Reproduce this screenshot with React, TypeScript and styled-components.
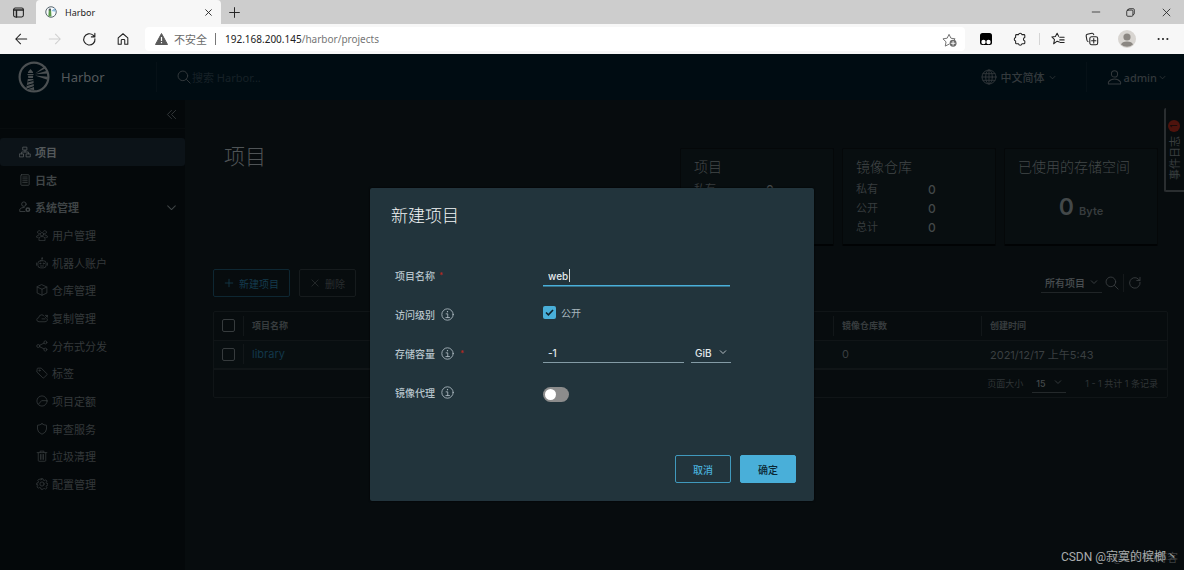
import React from 'react';
import styled, { createGlobalStyle, css } from 'styled-components';

const GlobalStyle = createGlobalStyle`
  *, *::before, *::after { box-sizing: border-box; }
  body { margin: 0; background: #070c0e; }
  button, input, select { font: inherit; color: inherit; margin: 0; }
  button { background: none; border: 0; padding: 0; cursor: pointer; }
  ul { list-style: none; margin: 0; padding: 0; }
  a { text-decoration: none; color: inherit; }
  svg { display: block; flex: none; }
`;

const chromeFont = `"Noto Sans", "Noto Sans CJK SC", sans-serif`;
const appFont = `Inter, "Noto Sans CJK SC", sans-serif`;

/* ---------- icons ---------- */

type IconName = keyof typeof shapes;

const shapes = {
  panel: (<><rect x="2" y="2.5" width="12" height="11" rx="2" /><path d="M2 5h12M5.500 5v8.500" strokeWidth="1.800" /></>),
  close: <path d="M3 3l10 10M13 3L3 13" />,
  plus: <path d="M8 2v12M2 8h12" />,
  minimize: <path d="M3 8h10" />,
  restore: (<><rect x="2.5" y="4.5" width="9" height="9" rx="1.5" /><path d="M5 4V3.500Q5 2.500 6 2.500h6Q13.500 2.500 13.500 4v6Q13.500 11 12 11" /></>),
  back: <path d="M14.500 8H2M7.500 2.500L2 8l5.500 5.500" />,
  forward: <path d="M1.500 8H14M8.500 2.500L14 8l-5.500 5.500" />,
  reload: <path d="M13.800 7.200a6 6 0 1 1-2-3.800l1.700 1.700M13.700 1.500v3.700h-3.700" />,
  home: <path d="M2.500 6.800L8 2l5.500 4.800V14H10V9.500q0-1-1-1H7q-1 0-1 1V14H2.500z" />,
  starAdd: (<><path d="M7.500 13l-4 2 .8-4.500L1 7.300l4.500-.7L7.500 2.500l2 4.100 4.500.7-1.500 1.500" /><circle cx="11.800" cy="12" r="3.700" fill="currentColor" stroke="none" /><path d="M11.800 10v4M9.800 12h4" stroke="#fff" /></>),
  puzzle: <path d="M4 3h2.300a2 2 0 0 1 3.900 0h2.300q1 0 1 1v2.300a2 2 0 0 0 0 3.900v2.300q0 1-1 1h-2.300a2 2 0 0 1-3.900 0H4q-1 0-1-1v-2.300a2 2 0 0 1 0-3.900V4q0-1 1-1z" />,
  starList: <path d="M9.500 11.500l-2.500-1-4 3 1-4.800L1 5.700l4-.5L7 1.500l1.800 3.500M10 6h5M10 9h5M10.500 12H15" />,
  collections: (<><rect x="5.500" y="5.500" width="9" height="9" rx="2" /><path d="M10 7.500v5M7.500 10h5M3.500 11Q2.500 10.500 2.200 9.300L1.300 4.500Q1.200 3 2.600 2.600L8 1.500q1.500-.2 2 1.500" /></>),
  dots: (<g fill="currentColor" stroke="none"><circle cx="3" cy="8" r="1.200" /><circle cx="8" cy="8" r="1.200" /><circle cx="13" cy="8" r="1.200" /></g>),
  search: (<><circle cx="6.700" cy="6.700" r="5.500" /><path d="M10.800 10.800L15 15" /></>),
  globe: (<><circle cx="8" cy="8" r="7" /><ellipse cx="8" cy="8" rx="3.300" ry="7" /><path d="M8 1v14M1 8h14M2 4.700h12M2 11.300h12" /></>),
  person: (<><circle cx="8" cy="4.200" r="3.300" /><path d="M1.500 15v-2.200Q4 9.600 8 9.600t6.500 3.200V15z" /></>),
  chevron: <path d="M2.500 5.500L8 11l5.500-5.500" />,
  collapse: <path d="M8 2L2 8l6 6M14 2L8 8l6 6" />,
  projects: (<><rect x="5.500" y="1.500" width="5" height="4" /><rect x="1" y="10.500" width="5" height="4" /><rect x="10" y="10.500" width="5" height="4" /><path d="M8 5.500V8M3.500 10.500V8h9v2.500" /></>),
  logs: (<><rect x="2.500" y="1" width="11" height="14" rx="1" /><path d="M5 4h1M7 4h4M5 6.500h1M7 6.500h4M5 9h1M7 9h4M5 11.500h1M7 11.500h4" /></>),
  admin: (<><circle cx="6.500" cy="4.200" r="3" /><path d="M8 14H1v-3q2-2.500 6-2.500" /><circle cx="11.800" cy="11.500" r="2.300" strokeWidth="2" /></>),
  users: (<><circle cx="8" cy="7" r="2.300" /><path d="M4 15v-3q1.500-2 4-2t4 2v3z" /><path d="M5 6.500A2.200 2.200 0 1 1 6 3M11 6.500A2.200 2.200 0 1 0 10 3M3 11H.800V9.500Q2 8 4 8M13 11h2.200V9.500Q14 8 12 8" /></>),
  robot: (<><rect x="2.500" y="5" width="11" height="9.500" rx="3.500" /><path d="M8 5V2M.800 8v3M15.200 8v3M6 12h4" /><circle cx="8" cy="1.500" r=".6" /><circle cx="5.700" cy="8.700" r=".7" /><circle cx="10.300" cy="8.700" r=".7" /></>),
  cube: <path d="M8 1l6.500 3v8L8 15l-6.500-3V4zM1.500 4L8 7l6.500-3M8 7v8" />,
  cloud: <path d="M14.500 8.500q1 1 .5 2.500-.6 2-3 2H4q-3-.3-3-2.700 0-2.200 2.500-2.600Q4 4 7.500 3.700q2.300 0 3.300 1.800M8 9.200h4M12.500 7.500L15 5M12.500 4.500h3V7" />,
  share: (<><circle cx="3" cy="8" r="2" /><circle cx="12.500" cy="3.200" r="2" /><circle cx="12.500" cy="12.800" r="2" /><path d="M4.800 7.100l6-3M4.800 8.900l6 3" /></>),
  tag: (<><path d="M1.500 2.500q0-1 1-1H7L14.500 9q.6.700 0 1.400l-4 4q-.7.600-1.400 0L1.500 7z" /><circle cx="4.700" cy="4.700" r=".8" /></>),
  quota: (<><circle cx="8" cy="8" r="6.800" /><path d="M3.500 12L7.500 7.500H14.500" /></>),
  shield: <path d="M8 1q3 2 6 2v5q0 4.500-6 7-6-2.500-6-7V3q3 0 6-2z" />,
  trash: <path d="M1.500 3.500h13M5.500 3.500V1.500h5v2M3 3.500V14q0 1 1 1h8q1 0 1-1V3.500M6 6v6.500M8 6v6.500M10 6v6.500" />,
  gear: (<><circle cx="8" cy="8" r="2.800" /><path d="M6.700 1h2.600l.5 1.900 1.300.5 1.700-1 1.800 1.800-1 1.700.5 1.300 1.900.5v1.600l-1.900.8-.5 1.300 1 1.700-1.800 1.800-1.700-1-1.300.5L9.300 15H6.700l-.5-1.900-1.300-.5-1.700 1-1.800-1.800 1-1.700-.5-1.300L1 9.300V6.700l1.900-.5.5-1.300-1-1.700 1.800-1.800 1.700 1 1.300-.5z" /></>),
  info: (<><circle cx="8" cy="8" r="7" /><circle cx="8" cy="4.500" r=".8" fill="currentColor" stroke="none" /><path d="M6.300 7.200h2v4.500M6 11.800h4.500" /></>),
};

const Icon = ({ name, size = 12, weight = 1 }: { name: IconName; size?: number; weight?: number }) => (
  <svg width={size} height={size} viewBox="0 0 16 16" fill="none" stroke="currentColor" strokeWidth={weight} strokeLinecap="round" strokeLinejoin="round" aria-hidden="true">
    {shapes[name]}
  </svg>
);

const HarborLogo = () => (
  <svg width="32" height="32" viewBox="0 0 32 32" aria-hidden="true">
    <circle cx="16" cy="16" r="14.400" fill="none" stroke="#4b5052" strokeWidth="2.200" />
    <g fill="#4b5052">
      <path d="M10 11l2.500-3L15 11v1h-5zM9.500 13h6v1h-6zM10 14.800h5.200l-.3 2.200h-4.600zM9.800 18h5.500l.9 11-8-.8z" />
      <path d="M17 12.500L27 5l1.300 2zM17 13.300l12.200-3.500.8 2.800zM17 14.500l13 1.300-.7 3z" />
    </g>
    <path d="M9.500 21l6-1.500M9 24.500l7-2M9 28l7-2.500" stroke="#000c12" strokeWidth="1" />
  </svg>
);

const Favicon = () => (
  <svg width="12" height="12" viewBox="0 0 16 16" aria-hidden="true">
    <circle cx="8" cy="8" r="7" fill="#f7fbfd" stroke="#53616a" strokeWidth="1.300" />
    <path d="M8.500 6.500L13 2.500l1.500 5z" fill="#8fbde0" />
    <path d="M5 5h3l.7 9H4.500z" fill="#5d9b4c" />
    <path d="M5 3.500h3V6H5z" fill="#52595d" />
  </svg>
);

/* ---------- browser frame ---------- */

const Page = styled.div`
  min-height: 100vh;
  display: flex;
  flex-direction: column;
  background: #070c0e;
`;

const TabStrip = styled.div`
  height: 24px;
  display: flex;
  align-items: stretch;
  background: #cdcdcd;
  color: #222;
  font: 9px ${chromeFont};
`;

const StripButton = styled.button<{ $width: number }>`
  width: ${p => p.$width}px;
  display: grid;
  place-items: center;
`;

const Tab = styled.div`
  width: 185px;
  display: flex;
  align-items: center;
  gap: 8px;
  padding: 0 8px 0 9px;
  background: #f7f7f7;
  border-radius: 4px 4px 0 0;
`;

const TabTitle = styled.span`
  flex: 1;
`;

const WindowButtons = styled.div`
  display: flex;
  margin-left: auto;
`;

const Toolbar = styled.div`
  height: 30px;
  display: flex;
  align-items: center;
  background: #f7f7f7;
  color: #222;
  font: 11px ${chromeFont};
`;

const ToolButton = styled.button<{ $width?: number; $faded?: boolean }>`
  width: ${p => p.$width ?? 34}px;
  height: 24px;
  display: grid;
  place-items: center;
  color: ${p => (p.$faded ? '#cfcfcf' : 'inherit')};
`;

const NavButtons = styled.div`
  display: flex;
  padding: 0 5px 0 4px;
`;

const AddressBar = styled.div`
  flex: 1;
  height: 24px;
  display: flex;
  align-items: center;
  gap: 6px;
  padding: 0 8px 0 10px;
  background: #fff;
  border-radius: 4px;
  color: #6b6b6b;
`;

const AddressDivider = styled.span`
  width: 1px;
  height: 12px;
  margin: 0 3px 0 2px;
  background: #777;
`;

const Url = styled.span`
  flex: 1;
  font-size: 10px;
  color: #767676;
  b { font-weight: 400; color: #222; }
`;

const ToolDivider = styled.span`
  width: 1px;
  height: 12px;
  background: #d5d5d5;
`;

const DividerSlot = styled.span`
  width: 12px;
  display: grid;
  place-items: center;
`;

/* ---------- application shell ---------- */

const Shell = styled.div`
  position: relative;
  flex: 1;
  display: flex;
  flex-direction: column;
  font: 11px ${appFont};
  color: #3a3f41;
`;

const Header = styled.header`
  height: 46px;
  display: flex;
  align-items: center;
  background: #000c12;
  color: #33393c;
`;

const Brand = styled.a`
  display: flex;
  align-items: center;
  gap: 11px;
  width: 157px;
  height: 30px;
  padding-left: 18px;
  border-right: 1px solid #061117;
  font: 13px "Noto Sans", sans-serif;
  color: #54595b;
`;

const GlobalSearch = styled.label`
  flex: 1;
  display: flex;
  align-items: center;
  gap: 1px;
  padding-left: 20px;
  input {
    width: 160px;
    padding: 0;
    border: 0;
    outline: 0;
    background: none;
    font: 11px "Noto Sans", "Noto Sans CJK SC", sans-serif;
    &::placeholder { color: #172127; opacity: 1; }
  }
`;

const HeaderMenu = styled.button<{ $gap: number }>`
  display: flex;
  align-items: center;
  gap: ${p => p.$gap}px;
  height: 30px;
  font: 500 11px "Noto Sans", "Noto Sans CJK SC", sans-serif;
`;

const LanguageMenu = styled(HeaderMenu)`
  padding-right: 30px;
  border-right: 1px solid #061117;
`;

const UserMenu = styled(HeaderMenu)`
  padding: 0 18px 0 20px;
`;

const Body = styled.div`
  flex: 1;
  display: flex;
`;

const Sidebar = styled.nav`
  width: 185px;
  flex: none;
  background: #04080a;
`;

const CollapseRow = styled.div`
  height: 29px;
  margin-bottom: 9px;
  display: flex;
  align-items: center;
  justify-content: flex-end;
  padding-right: 8px;
  border-bottom: 1px solid #080c0e;
`;

const MenuList = styled.ul`
  height: 360px;
  display: grid;
  grid-auto-rows: 1fr;
`;

const MenuLink = styled.a<{ $nested?: boolean; $active?: boolean }>`
  height: 100%;
  display: flex;
  align-items: center;
  gap: 4px;
  padding: 0 8px 0 ${p => (p.$nested ? 36 : 19)}px;
  border-radius: 3px;
  color: ${p => (p.$nested ? '#34393b' : '#3f4446')};
  font-weight: ${p => (p.$nested ? 400 : 700)};
  ${p => p.$active && css`
    background: #0c1318;
    color: #54595b;
  `}
  span { flex: 1; }
`;

const Content = styled.main`
  flex: 1;
  min-width: 0;
  padding: 48px 16px 0 28px;
`;

const Summary = styled.div`
  display: flex;
  justify-content: space-between;
  padding: 0 10px 0 11px;
  min-height: 99px;
`;

const PageTitle = styled.h1`
  margin: 0;
  font-size: 21px;
  line-height: 17px;
  font-weight: 300;
  color: #4f5456;
`;

const Cards = styled.div`
  display: flex;
  gap: 8px;
`;

const Card = styled.section`
  width: 154px;
  height: 98px;
  padding: 8px 13px;
  border: 1px solid #050809;
  border-bottom: 2px solid #010304;
  border-radius: 2px;
  background: #080e10;
  color: #373c3e;
`;

const CardTitle = styled.h2`
  margin: 0 0 3px;
  font-size: 14px;
  line-height: 20px;
  font-weight: 300;
  color: #434849;
`;

const Stat = styled.div`
  display: grid;
  grid-template-columns: 72px 1fr;
  line-height: 19px;
  b { font-weight: 500; font-size: 12px; color: #434849; }
`;

const Storage = styled.div`
  display: flex;
  align-items: baseline;
  justify-content: center;
  gap: 5px;
  font-weight: 600;
  line-height: 54px;
  strong { font-size: 23px; font-weight: 600; color: #434849; }
`;

const Actions = styled.div`
  display: flex;
  align-items: center;
  gap: 9px;
  margin: 22px 0 14px;
`;

const OutlineButton = styled.button<{ $muted?: boolean }>`
  height: 28px;
  display: flex;
  align-items: center;
  gap: 5px;
  padding: 0 10px;
  border: 1px solid ${p => (p.$muted ? '#161b1d' : '#0e2732')};
  border-radius: 2px;
  color: ${p => (p.$muted ? '#292d2f' : '#143b4d')};
  font-size: 10px;
`;

const Filters = styled.div`
  display: flex;
  align-items: center;
  gap: 3px;
  margin-left: auto;
  padding-right: 26px;
`;

const FilterDivider = styled.span`
  width: 1px;
  height: 18px;
  margin: 0 1px;
  background: #15191b;
`;

const SelectBox = styled.span<{ $width: number; $line: string }>`
  position: relative;
  display: inline-flex;
  width: ${p => p.$width}px;
  border-bottom: 1px solid ${p => p.$line};
  select {
    width: 100%;
    height: 18px;
    padding: 0 0 0 4px;
    border: 0;
    outline: 0;
    appearance: none;
    background: transparent;
    font-weight: 500;
  }
  svg {
    position: absolute;
    right: 4px;
    top: 4px;
    pointer-events: none;
  }
`;

const FilterSelect = styled(SelectBox)`
  font-size: 10px;
  color: #4a4f51;
`;

const PageSizeSelect = styled(SelectBox)`
  color: #44494b;
`;

const TableFrame = styled.div`
  border: 1px solid #101517;
  border-radius: 2px;
`;

const Table = styled.table`
  width: 100%;
  border-collapse: collapse;
  table-layout: fixed;
  th, td { padding: 0; text-align: left; font-weight: 400; }
  th { height: 28px; font-size: 9px; font-weight: 700; color: #373c3e; }
  td { height: 28px; background: #080e10; border-top: 1px solid #101517; }
`;

const Cell = styled.div<{ $first?: boolean }>`
  height: 20px;
  display: flex;
  align-items: center;
  padding-left: ${p => (p.$first ? 0 : 8)}px;
  border-left: ${p => (p.$first ? 0 : 1)}px solid #121719;
`;

const BodyCell = styled.div`
  padding-left: 9px;
`;

const RowCheck = styled.input`
  appearance: none;
  display: block;
  width: 13px;
  height: 13px;
  margin: 0 0 0 8px;
  border: 1px solid #363b3d;
  border-radius: 2px;
`;

const TableFooter = styled.div`
  height: 29px;
  display: flex;
  align-items: center;
  justify-content: flex-end;
  gap: 9px;
  padding-right: 9px;
  border-top: 2px solid #101517;
  font-size: 9px;
  color: #303537;
`;

const RecordCount = styled.span`
  margin-left: 10px;
`;

const ProjectLink = styled.a`
  color: #12374a;
`;

const EventTab = styled.button`
  position: absolute;
  top: 54px;
  right: 0;
  width: 20px;
  height: 84px;
  display: flex;
  flex-direction: column;
  align-items: center;
  gap: 4px;
  padding: 12px 2px 0 0;
  border-left: 2px solid #2a2e30;
  border-bottom: 2px solid #2a2e30;
  border-radius: 2px 0 0 2px;
  font-size: 11px;
`;

const EventBadge = styled.span`
  width: 12px;
  height: 12px;
  border-radius: 50%;
  background: #4e130d;
  color: #0a0a0a;
  font-size: 9px;
  line-height: 12px;
  text-align: center;
  transform: rotate(-90deg);
`;

const EventLabel = styled.span`
  writing-mode: vertical-rl;
  text-orientation: sideways;
  transform: rotate(180deg);
`;

/* ---------- dialog ---------- */

const Backdrop = styled.div`
  position: absolute;
  inset: 0;
  display: flex;
  justify-content: center;
  align-items: flex-start;
  padding-top: 134px;
`;

const Dialog = styled.form`
  width: 444px;
  padding: 18px 18px 18px 21px;
  border-radius: 2px;
  background: #22343c;
  box-shadow: 0 0 2px #000;
  color: #b6c3ca;
  font-size: 10px;
`;

const DialogTitle = styled.h2`
  margin: 0 0 40px;
  font-size: 17px;
  line-height: 20px;
  font-weight: 300;
  color: #f2f5f6;
`;

const Field = styled.div`
  height: 39px;
  display: grid;
  grid-template-columns: 148px 1fr;
  margin-left: 4px;
`;

const FieldLabel = styled.div<{ $gap?: number }>`
  display: flex;
  align-items: center;
  gap: ${p => p.$gap ?? 6}px;
  height: 24px;
  margin-top: -3px;
  font-weight: 500;
`;

const Required = styled.span`
  color: #b8281c;
  font-size: 8px;
`;

const Controls = styled.div`
  position: relative;
  display: flex;
  align-items: flex-start;
  gap: 7px;
  color: #e4eaed;
`;

const TextInput = styled.input<{ $width: number; $active?: boolean }>`
  width: ${p => p.$width}px;
  height: 19px;
  padding: 0 5px;
  border: 0;
  border-bottom: 1px solid #849ba5;
  outline: 0;
  background: none;
  font-weight: 500;
  ${p => p.$active && css`
    height: 20px;
    border-bottom-color: #49afd9;
    box-shadow: 0 1px 0 rgba(73, 175, 217, 0.5);
  `}
`;

const Caret = styled.span`
  position: absolute;
  left: 26px;
  top: 3px;
  width: 1px;
  height: 13px;
  background: #cfd8dc;
`;

const CheckLabel = styled.label`
  display: flex;
  align-items: center;
  gap: 5px;
  height: 15px;
  color: #a9b7be;
`;

const CheckMark = styled.span`
  position: relative;
  display: block;
  width: 13px;
  height: 13px;
  input {
    appearance: none;
    display: block;
    width: 13px;
    height: 13px;
    border-radius: 2px;
    background: #49afd9;
  }
  svg {
    position: absolute;
    inset: 0;
    pointer-events: none;
  }
`;

const Toggle = styled.input`
  appearance: none;
  width: 26px;
  height: 15px;
  margin: 4px 0 0;
  padding: 2px;
  border-radius: 8px;
  background: #8c8c8c;
  &::before {
    content: '';
    display: block;
    width: 11px;
    height: 11px;
    border-radius: 50%;
    background: #fff;
  }
`;

const DialogActions = styled.div`
  display: flex;
  justify-content: flex-end;
  gap: 9px;
  margin-top: 33px;
`;

const DialogButton = styled.button<{ $primary?: boolean }>`
  width: 56px;
  height: 28px;
  border: 1px solid #4099bd;
  border-radius: 2px;
  color: ${p => (p.$primary ? '#0b2733' : '#49afd9')};
  font-weight: 500;
  ${p => p.$primary && css`
    border-color: #49afd9;
    background: #49afd9;
  `}
`;

const Watermark = styled.div`
  position: absolute;
  right: 6px;
  bottom: 4px;
  font: 12px/17px Roboto, "Noto Sans CJK SC", sans-serif;
  color: #a9acad;
`;

const BackMark = styled.div`
  position: absolute;
  right: 6px;
  bottom: 3px;
  font: 11px/17px Roboto, "Noto Sans CJK SC", sans-serif;
  color: #3c4042;
`;

/* ---------- data ---------- */

const menu: { label: string; icon: IconName; nested?: boolean; active?: boolean; expandable?: boolean }[] = [
  { label: '项目', icon: 'projects', active: true },
  { label: '日志', icon: 'logs' },
  { label: '系统管理', icon: 'admin', expandable: true },
  { label: '用户管理', icon: 'users', nested: true },
  { label: '机器人账户', icon: 'robot', nested: true },
  { label: '仓库管理', icon: 'cube', nested: true },
  { label: '复制管理', icon: 'cloud', nested: true },
  { label: '分布式分发', icon: 'share', nested: true },
  { label: '标签', icon: 'tag', nested: true },
  { label: '项目定额', icon: 'quota', nested: true },
  { label: '审查服务', icon: 'shield', nested: true },
  { label: '垃圾清理', icon: 'trash', nested: true },
  { label: '配置管理', icon: 'gear', nested: true },
];

const statCards = [
  { title: '项目', rows: [['私有', 0], ['公开', 1], ['总计', 1]] },
  { title: '镜像仓库', rows: [['私有', 0], ['公开', 0], ['总计', 0]] },
];

/* ---------- sections ---------- */

const BrowserFrame = () => (
  <>
    <TabStrip>
      <StripButton $width={36} aria-label="Tab actions"><Icon name="panel" size={13} weight={1.3} /></StripButton>
      <Tab>
        <Favicon />
        <TabTitle>Harbor</TabTitle>
        <button aria-label="Close tab"><Icon name="close" size={9} weight={1.6} /></button>
      </Tab>
      <StripButton $width={27} aria-label="New tab"><Icon name="plus" size={13} weight={1.2} /></StripButton>
      <WindowButtons>
        <StripButton $width={35} aria-label="Minimize"><Icon name="minimize" size={12} /></StripButton>
        <StripButton $width={35} aria-label="Restore"><Icon name="restore" size={11} weight={1.2} /></StripButton>
        <StripButton $width={36} aria-label="Close window"><Icon name="close" size={11} weight={1.2} /></StripButton>
      </WindowButtons>
    </TabStrip>
    <Toolbar>
      <NavButtons>
        <ToolButton aria-label="Back"><Icon name="back" size={14} weight={1.2} /></ToolButton>
        <ToolButton aria-label="Forward" $faded><Icon name="forward" size={14} weight={1.2} /></ToolButton>
        <ToolButton aria-label="Reload"><Icon name="reload" size={15} weight={1.2} /></ToolButton>
        <ToolButton aria-label="Home"><Icon name="home" size={14} weight={1.2} /></ToolButton>
      </NavButtons>
      <AddressBar>
        <svg width="13" height="12" viewBox="0 0 13 12" aria-hidden="true">
          <path d="M6.500.500L12.500 11.500H.500z" fill="#5a5a5a" stroke="#5a5a5a" strokeLinejoin="round" />
          <path d="M6.500 4v4M6.500 9v1.300" stroke="#fff" strokeWidth="1.200" />
        </svg>
        <span>不安全</span>
        <AddressDivider />
        <Url><b>192.168.200.145</b>/harbor/projects</Url>
        <button aria-label="Add to favorites"><Icon name="starAdd" size={15} /></button>
      </AddressBar>
      <ToolButton aria-label="Tampermonkey" $width={42}>
        <svg width="14" height="14" viewBox="0 0 14 14" aria-hidden="true">
          <rect x="1" y="1" width="12" height="12" rx="2.500" fill="#000" />
          <circle cx="4.500" cy="10" r="2.200" fill="#fff" /><circle cx="9.500" cy="10" r="2.200" fill="#fff" />
        </svg>
      </ToolButton>
      <ToolButton aria-label="Extensions" $width={26}><Icon name="puzzle" size={14} weight={1.2} /></ToolButton>
      <DividerSlot><ToolDivider /></DividerSlot>
      <ToolButton aria-label="Favorites" $width={26}><Icon name="starList" size={14} weight={1.2} /></ToolButton>
      <ToolButton aria-label="Collections" $width={41}><Icon name="collections" size={14} weight={1.2} /></ToolButton>
      <ToolButton aria-label="Profile" $width={30}>
        <svg width="18" height="18" viewBox="0 0 18 18" aria-hidden="true">
          <circle cx="9" cy="9" r="9" fill="#d8d5d1" />
          <circle cx="9" cy="7" r="3.600" fill="#8b8782" />
          <path d="M3 14.500Q4 11.600 9 11.600t6 2.900A9 9 0 0 1 3 14.500z" fill="#8b8782" />
        </svg>
      </ToolButton>
      <ToolButton aria-label="Settings and more" $width={42}><Icon name="dots" size={14} /></ToolButton>
    </Toolbar>
  </>
);

const SideMenu = () => (
  <Sidebar>
    <CollapseRow>
      <button aria-label="收起"><Icon name="collapse" size={11} weight={1.2} /></button>
    </CollapseRow>
    <MenuList>
      {menu.map(item => (
        <li key={item.label}>
          <MenuLink href="#" $nested={item.nested} $active={item.active}>
            <Icon name={item.icon} size={12} weight={1.1} />
            <span>{item.label}</span>
            {item.expandable && <Icon name="chevron" size={11} weight={1.5} />}
          </MenuLink>
        </li>
      ))}
    </MenuList>
  </Sidebar>
);

const ProjectsPage = () => (
  <Content>
    <Summary>
      <PageTitle>项目</PageTitle>
      <Cards>
        {statCards.map(card => (
          <Card key={card.title}>
            <CardTitle>{card.title}</CardTitle>
            {card.rows.map(([label, value]) => (
              <Stat key={label}><span>{label}</span><b>{value}</b></Stat>
            ))}
          </Card>
        ))}
        <Card>
          <CardTitle>已使用的存储空间</CardTitle>
          <Storage><strong>0</strong>Byte</Storage>
        </Card>
      </Cards>
    </Summary>
    <Actions>
      <OutlineButton><Icon name="plus" size={10} weight={1.3} />新建项目</OutlineButton>
      <OutlineButton $muted><Icon name="close" size={10} weight={1.3} />删除</OutlineButton>
      <Filters>
        <FilterSelect $width={61} $line="#202527">
          <select aria-label="项目范围"><option>所有项目</option></select>
          <Icon name="chevron" size={8} weight={1.5} />
        </FilterSelect>
        <button aria-label="搜索"><Icon name="search" size={14} /></button>
        <FilterDivider />
        <button aria-label="刷新"><Icon name="reload" size={14} /></button>
      </Filters>
    </Actions>
    <TableFrame>
      <Table>
        <colgroup>
          <col width="29" />
          <col />
          <col width="148" />
          <col width="186" />
        </colgroup>
        <thead>
          <tr>
            <th><Cell $first><RowCheck type="checkbox" aria-label="全选" /></Cell></th>
            <th><Cell>项目名称</Cell></th>
            <th><Cell>镜像仓库数</Cell></th>
            <th><Cell>创建时间</Cell></th>
          </tr>
        </thead>
        <tbody>
          <tr>
            <td><RowCheck type="checkbox" aria-label="选择 library" /></td>
            <td><Cell><ProjectLink href="#">library</ProjectLink></Cell></td>
            <td><BodyCell>0</BodyCell></td>
            <td><BodyCell>2021/12/17 上午5:43</BodyCell></td>
          </tr>
        </tbody>
      </Table>
      <TableFooter>
        <label htmlFor="page-size">页面大小</label>
        <PageSizeSelect $width={34} $line="#24292b">
          <select id="page-size"><option>15</option></select>
          <Icon name="chevron" size={8} weight={1.5} />
        </PageSizeSelect>
        <RecordCount>1 - 1 共计 1 条记录</RecordCount>
      </TableFooter>
    </TableFrame>
  </Content>
);

const NewProjectDialog = () => (
  <Backdrop>
    <Dialog role="dialog" aria-labelledby="dialog-title" onSubmit={e => e.preventDefault()}>
      <DialogTitle id="dialog-title">新建项目</DialogTitle>
      <Field>
        <FieldLabel $gap={4}><label htmlFor="name">项目名称</label><Required>*</Required></FieldLabel>
        <Controls>
          <TextInput id="name" $width={187} $active defaultValue="web" />
          <Caret />
        </Controls>
      </Field>
      <Field>
        <FieldLabel><span>访问级别</span><Icon name="info" size={13} /></FieldLabel>
        <Controls>
          <CheckLabel>
            <CheckMark>
              <input type="checkbox" defaultChecked />
              <svg width="13" height="13" viewBox="0 0 13 13" fill="none" stroke="#10222b" strokeWidth="1.600" aria-hidden="true"><path d="M3 6.500l2.400 2.300L10 4" /></svg>
            </CheckMark>
            公开
          </CheckLabel>
        </Controls>
      </Field>
      <Field>
        <FieldLabel><label htmlFor="quota">存储容量</label><Icon name="info" size={13} /><Required>*</Required></FieldLabel>
        <Controls>
          <TextInput id="quota" $width={141} defaultValue="-1" />
          <SelectBox $width={40} $line="#849ba5">
            <select aria-label="单位"><option>GiB</option></select>
            <Icon name="chevron" size={8} weight={1.5} />
          </SelectBox>
        </Controls>
      </Field>
      <Field>
        <FieldLabel><label htmlFor="proxy">镜像代理</label><Icon name="info" size={13} /></FieldLabel>
        <Controls><Toggle id="proxy" type="checkbox" role="switch" /></Controls>
      </Field>
      <DialogActions>
        <DialogButton type="button">取消</DialogButton>
        <DialogButton type="submit" $primary>确定</DialogButton>
      </DialogActions>
    </Dialog>
  </Backdrop>
);

export default function App() {
  return (
    <Page>
      <GlobalStyle />
      <BrowserFrame />
      <Shell>
        <Header>
          <Brand href="#"><HarborLogo />Harbor</Brand>
          <GlobalSearch>
            <Icon name="search" size={14} weight={1.1} />
            <input type="search" placeholder="搜索 Harbor..." />
          </GlobalSearch>
          <LanguageMenu $gap={4}><Icon name="globe" size={16} weight={0.9} />中文简体<Icon name="chevron" size={7} weight={1.8} /></LanguageMenu>
          <UserMenu $gap={2}><Icon name="person" size={15} weight={1.1} />admin<Icon name="chevron" size={7} weight={1.8} /></UserMenu>
        </Header>
        <Body>
          <SideMenu />
          <ProjectsPage />
        </Body>
        <EventTab><EventBadge>1</EventBadge><EventLabel>事件日志</EventLabel></EventTab>
        <NewProjectDialog />
        <BackMark>@51CTO博客</BackMark>
        <Watermark>CSDN @寂寞的槟榔丶</Watermark>
      </Shell>
    </Page>
  );
}
